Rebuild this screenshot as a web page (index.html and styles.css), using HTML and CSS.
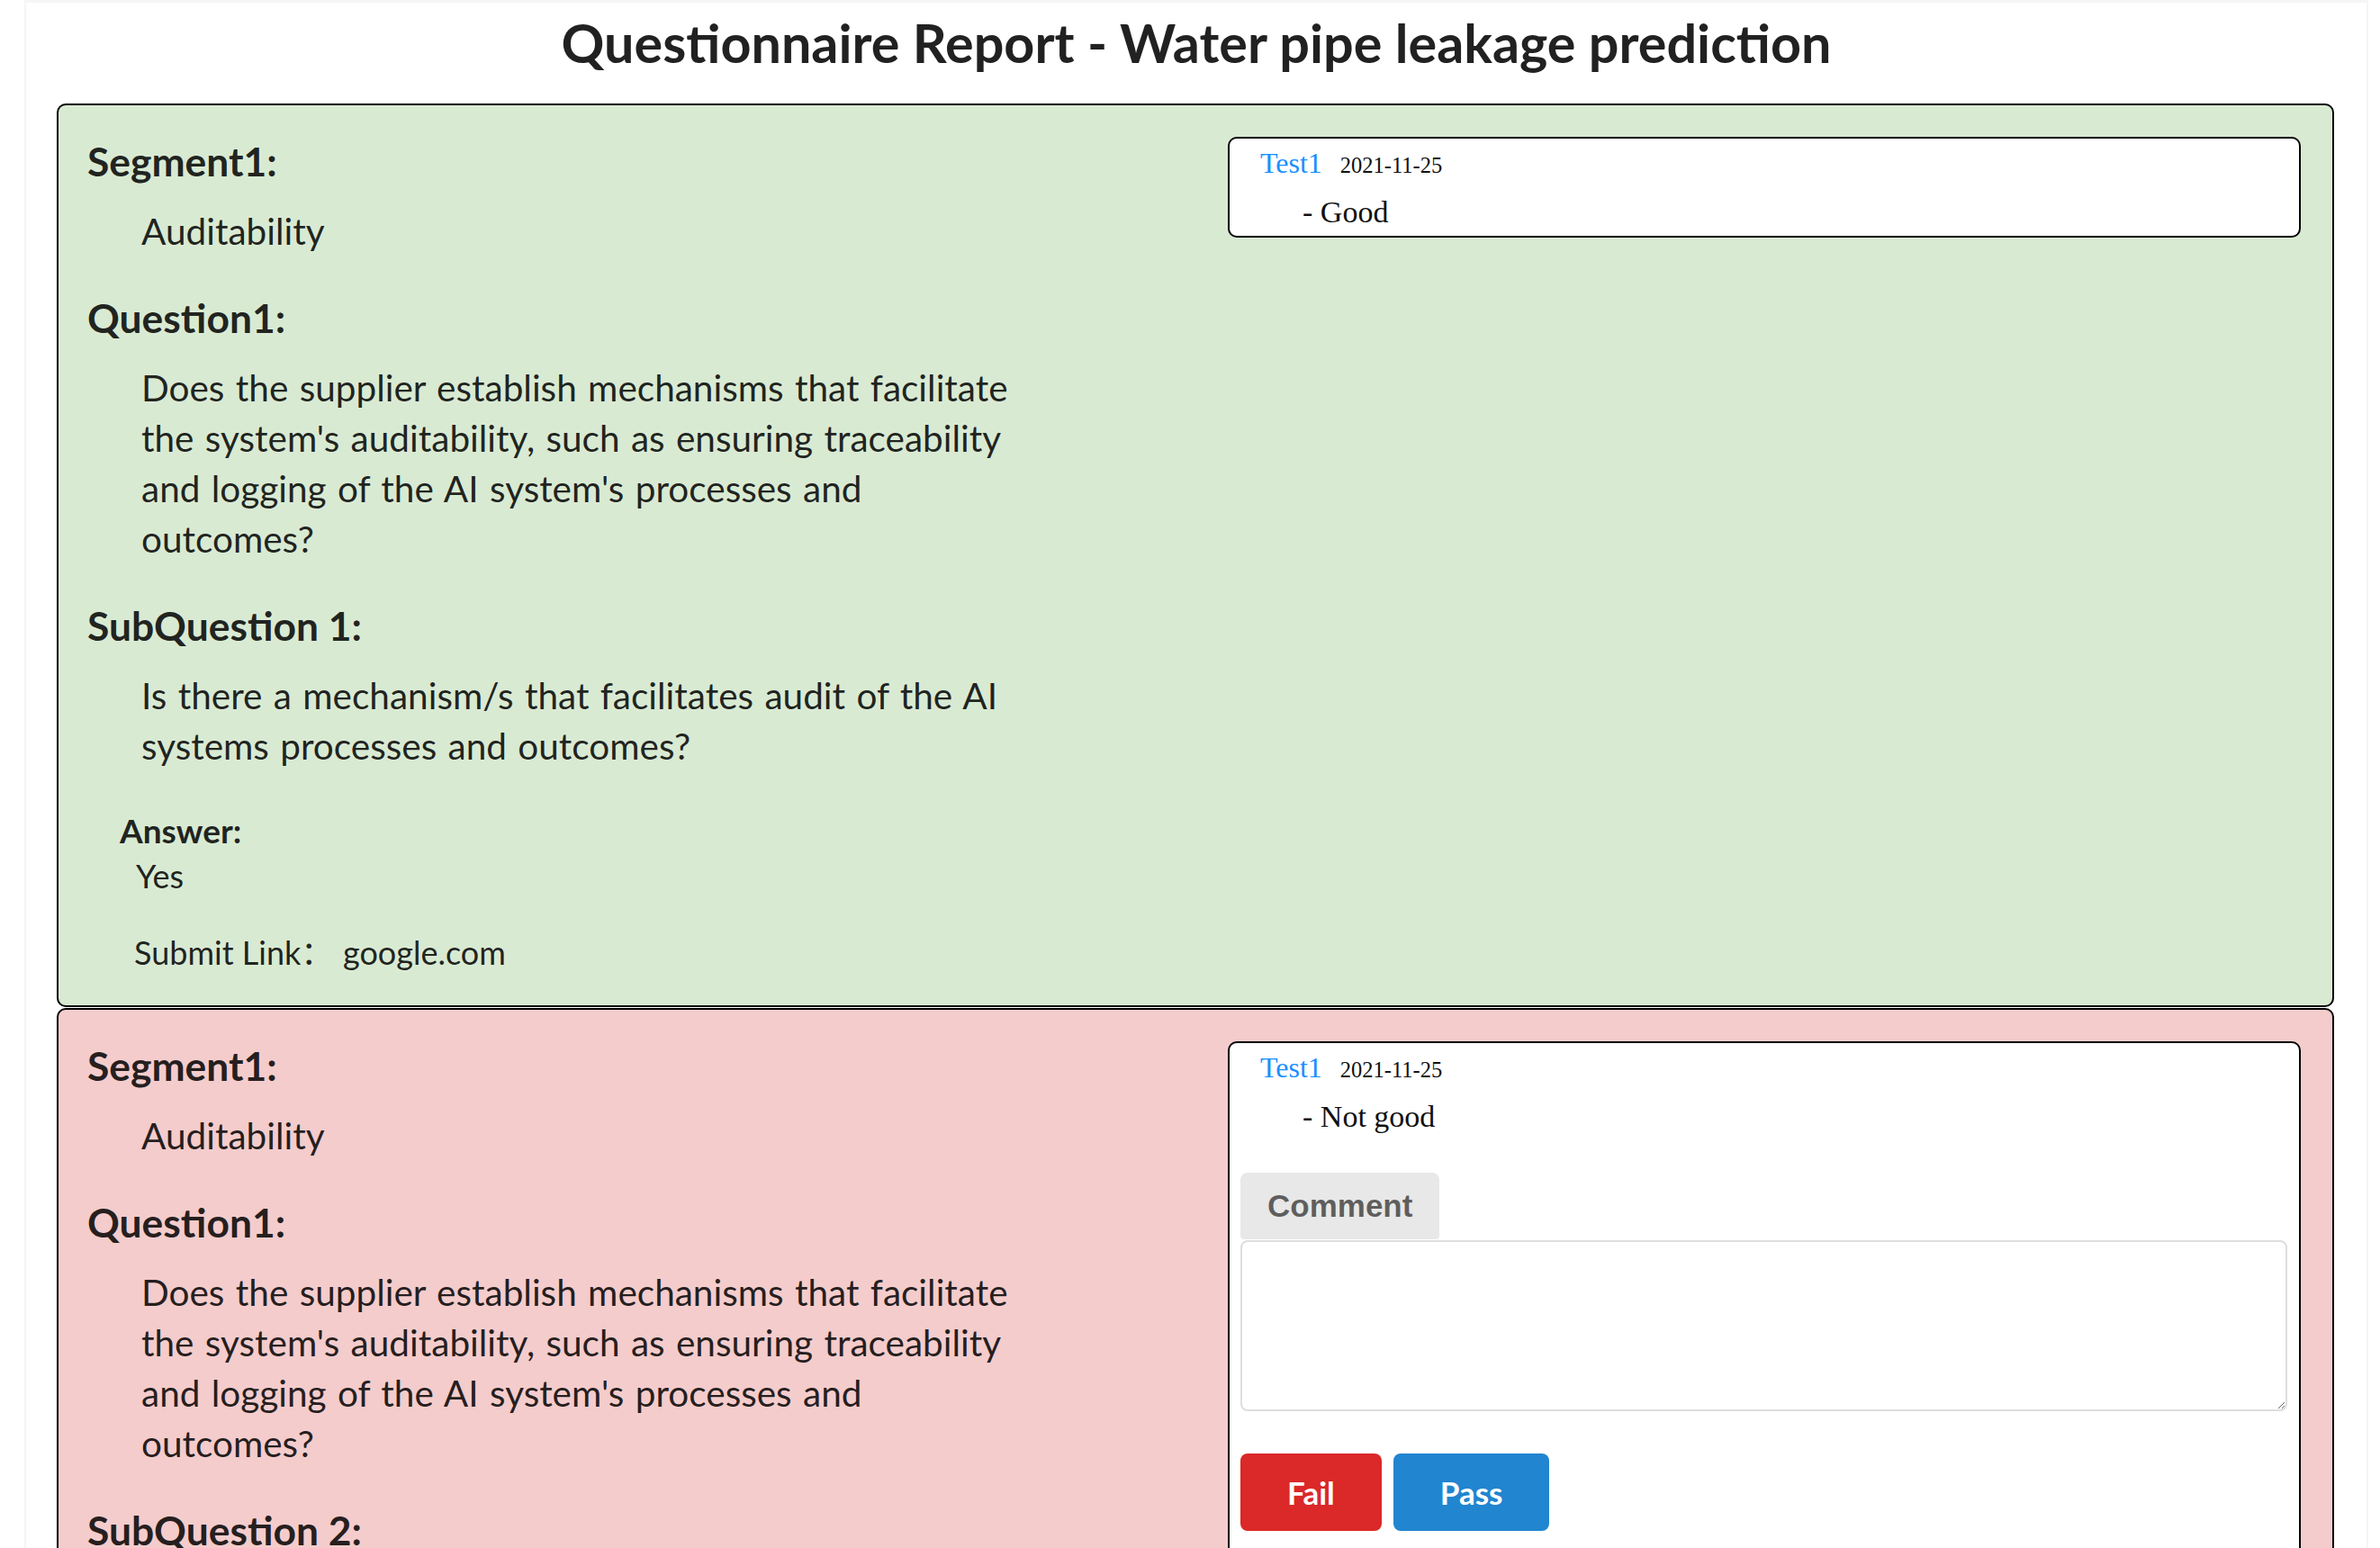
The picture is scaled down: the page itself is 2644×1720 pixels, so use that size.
FILE: index.html
```html
<!DOCTYPE html>
<html lang="en">
<head>
<meta charset="utf-8">
<title>Questionnaire Report - Water pipe leakage prediction</title>
<link rel="stylesheet" href="styles.css">
</head>
<body>
<div class="page">
  <h1 class="title">Questionnaire Report - Water pipe leakage prediction</h1>

  <section class="qbox qbox-pass">
    <div class="qmain">
      <h3 class="qhead">Segment1:</h3>
      <p class="qtext">Auditability</p>
      <h3 class="qhead">Question1:</h3>
      <p class="qtext">Does the supplier establish mechanisms that facilitate the system's auditability, such as ensuring traceability and logging of the AI system's processes and outcomes?</p>
      <h3 class="qhead">SubQuestion 1:</h3>
      <p class="qtext">Is there a mechanism/s that facilitates audit of the AI systems processes and outcomes?</p>
      <div class="answer">
        <div class="answer-label">Answer:</div>
        <div class="answer-value">Yes</div>
        <div class="submit-link"><span class="submit-label">Submit Link：</span><span class="submit-url">google.com</span></div>
      </div>
    </div>
    <aside class="qside">
      <div class="cbox">
        <div class="citem">
          <div class="cmeta"><span class="cuser">Test1</span><span class="cdate">2021-11-25</span></div>
          <div class="ctext">- Good</div>
        </div>
      </div>
    </aside>
  </section>

  <section class="qbox qbox-fail">
    <div class="qmain">
      <h3 class="qhead">Segment1:</h3>
      <p class="qtext">Auditability</p>
      <h3 class="qhead">Question1:</h3>
      <p class="qtext">Does the supplier establish mechanisms that facilitate the system's auditability, such as ensuring traceability and logging of the AI system's processes and outcomes?</p>
      <h3 class="qhead">SubQuestion 2:</h3>
    </div>
    <aside class="qside">
      <div class="cbox">
        <div class="citem">
          <div class="cmeta"><span class="cuser">Test1</span><span class="cdate">2021-11-25</span></div>
          <div class="ctext">- Not good</div>
        </div>
        <form class="cform">
          <div class="clabel">Comment</div>
          <textarea class="carea"></textarea>
          <div class="cactions">
            <button type="button" class="btn btn-fail">Fail</button>
            <button type="button" class="btn btn-pass">Pass</button>
          </div>
        </form>
      </div>
    </aside>
  </section>
</div>
</body>
</html>
```
FILE: styles.css
```css
html, body {
  margin: 0;
  padding: 0;
  background: #ffffff;
}

body {
  height: 100vh;
  overflow: hidden;
  font-family: Lato, "Noto Sans CJK SC", sans-serif;
  color: rgba(0, 0, 0, 0.87);
}

.page {
  margin-left: 27px;
  width: 2604px;
  min-height: 100vh;
  border-left: 2px solid #f5f5f5;
  border-right: 2px solid #f5f5f5;
  border-top: 3px solid #f6f6f6;
  box-sizing: border-box;
}

.title {
  margin: 0 0 32px;
  padding-top: 8px;
  font-family: Lato, sans-serif;
  font-weight: 700;
  font-size: 59.3px;
  line-height: 72px;
  text-align: center;
  color: rgba(0, 0, 0, 0.87);
}

.qbox {
  margin: 0 36px 0 34px;
  border: 2px solid #000;
  border-radius: 10px;
  padding: 35px 35px 37px 32px;
  display: grid;
  grid-template-columns: 1fr 1192px;
  align-items: start;
}

.qbox + .qbox {
  margin-top: 1px;
}

.qbox-pass {
  background: #d9ead3;
}

.qbox-fail {
  background: #f4cccc;
}

.qmain {
  min-width: 0;
}

.qhead {
  margin: 41px 0 0;
  font-family: Lato, sans-serif;
  font-weight: 700;
  font-size: 44.4px;
  line-height: 54px;
}

.qhead:first-child {
  margin-top: 0;
}

.qtext {
  margin: 23px 0 0;
  padding-left: 60px;
  max-width: 985px;
  font-family: Lato, sans-serif;
  font-weight: 400;
  font-size: 40.5px;
  word-spacing: 2px;
  line-height: 56px;
}

.answer {
  margin-top: 44px;
}

.answer-label {
  margin-left: 36px;
  font-family: Lato, sans-serif;
  font-weight: 700;
  font-size: 37px;
  line-height: 44px;
}

.answer-value {
  margin: 6px 0 0 54px;
  font-size: 36px;
  line-height: 44px;
}

.submit-link {
  margin: 41px 0 0 52px;
  font-size: 36px;
  line-height: 44px;
  display: flex;
}

.submit-label {
  width: 232px;
  font-family: Lato, "Noto Sans CJK SC", sans-serif;
}

.cbox {
  background: #ffffff;
  border: 2px solid #000;
  border-radius: 10px;
  padding: 7px 0 6px;
  font-family: "Liberation Serif", "Times New Roman", serif;
  color: #000;
}

.citem {
  padding-left: 34px;
}

.cmeta {
  line-height: 40px;
  display: flex;
  align-items: baseline;
  gap: 20px;
}

.cuser {
  color: #1890ff;
  font-size: 32px;
}

.cdate {
  font-size: 24.5px;
  color: #111;
}

.ctext {
  margin: 12px 0 0 47px;
  font-size: 34px;
  line-height: 40px;
  color: #111;
}

.cform {
  margin: 42px 13px 0 12px;
  padding-bottom: 40px;
  display: flex;
  flex-direction: column;
  align-items: flex-start;
}

.clabel {
  background: #e8e8e8;
  color: rgba(0, 0, 0, 0.6);
  font-family: "Liberation Sans", Arial, sans-serif;
  font-weight: 700;
  font-size: 35px;
  line-height: 74px;
  padding: 0 30px;
  border-radius: 8px 8px 4px 4px;
}

.carea {
  margin-top: 1px;
  width: 100%;
  height: 190px;
  box-sizing: border-box;
  border: 2px solid #dedede;
  border-radius: 8px;
  background: #fff;
  font-family: Lato, sans-serif;
  font-size: 30px;
  padding: 12px 16px;
}

.cactions {
  margin-top: 47px;
  display: flex;
  gap: 13px;
}

.btn {
  border: none;
  border-radius: 8px;
  color: #fff;
  font-family: Lato, sans-serif;
  font-weight: 700;
  font-size: 35px;
  line-height: 86px;
  height: 86px;
  padding: 0 52px;
  cursor: pointer;
}

.btn-fail {
  background: #db2828;
}

.btn-pass {
  background: #2185d0;
}
```
